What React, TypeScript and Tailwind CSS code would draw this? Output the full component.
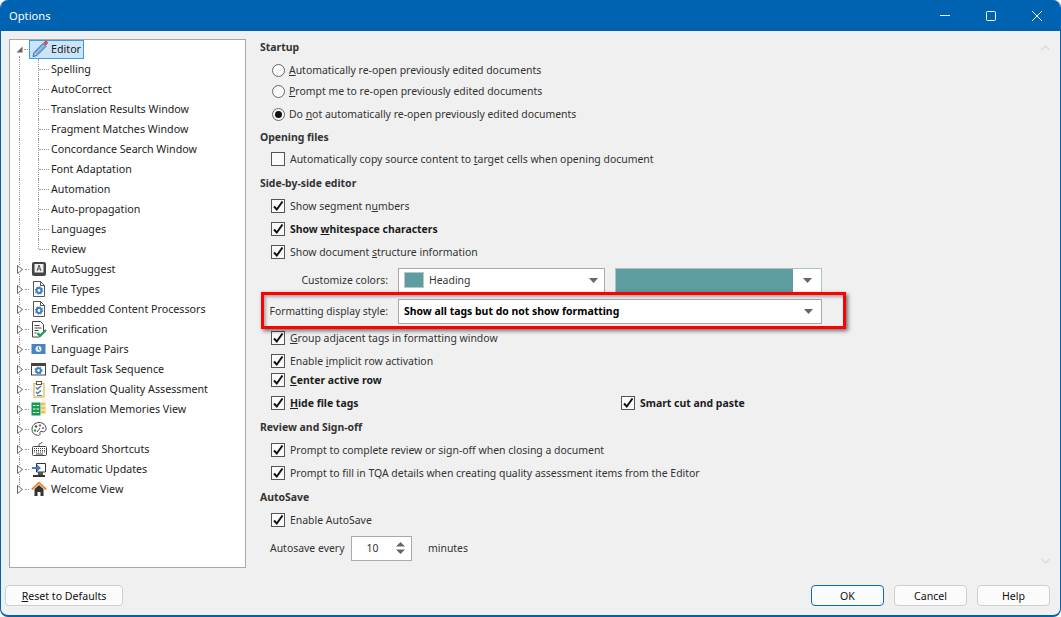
import React from 'react';

const Gear = ({ x, y, r = 3.4, color = '#3f7cc0' }: { x: number; y: number; r?: number; color?: string }) => (
  <g>
    <circle cx={x} cy={y} r={r} fill="none" stroke={color} strokeWidth={2} />
    <circle cx={x} cy={y} r={r + 1.2} fill="none" stroke={color} strokeWidth={1.2} strokeDasharray="1.4 1.4" />
    <circle cx={x} cy={y} r={1} fill="#fff" />
  </g>
);

const DocGear = () => (
  <svg width="16" height="16" viewBox="0 0 16 16">
    <path d="M2.5.5h7l4 4v11h-11z" fill="#fff" stroke="#555" />
    <path d="M9.5.5v4h4" fill="none" stroke="#555" />
    <Gear x={8} y={9.5} r={2.4} />
  </svg>
);

const icons: Record<string, React.ReactNode> = {
  editor: (
    <svg width="18" height="18" viewBox="0 0 18 18">
      <path d="M12 3.5l3 3L6 15.5l-4 1 1-4z" fill="#a9c8ea" stroke="#2f6db5" />
      <path d="M4 12.5l8.500-8.500M5.500 14l8.500-8.500" stroke="#2f6db5" strokeWidth={0.7} />
      <path d="M12.500 3l1.500-1.500a1.400 1.400 0 0 1 2.200 0.300 1.400 1.400 0 0 1 0 1.900L14.800 5.200z" fill="#d9534f" stroke="#b03a3a" strokeWidth={0.6} />
    </svg>
  ),
  suggest: (
    <svg width="16" height="16" viewBox="0 0 16 16">
      <rect x="1" y="1" width="14" height="14" rx="2" fill="#444" />
      <rect x="3.500" y="3" width="9" height="8.500" fill="#eee" />
      <path d="M6 10l2-6 2 6M6.800 8h2.400" fill="none" stroke="#444" strokeWidth={0.9} />
    </svg>
  ),
  doc: <DocGear />,
  verify: (
    <svg width="16" height="17" viewBox="0 0 16 17">
      <path d="M1.500.5h8l3 3v8l-4 4.500H1.500z" fill="#fff" stroke="#444" />
      <path d="M3.500 4.500h5M3.500 7h7M3.500 9.500h4M3.500 12h2" stroke="#444" />
      <path d="M6.500 12l2.500 2.800L15 9" fill="none" stroke="#1f9d55" strokeWidth={2.400} />
    </svg>
  ),
  pairs: (
    <svg width="16" height="16" viewBox="0 0 16 16">
      <rect x="0.500" y="3" width="14" height="10" fill="#4a83c4" />
      <circle cx="7.500" cy="8" r="3" fill="#e8f0fa" />
      <path d="M7.500 6v2.500l1.300.5" fill="none" stroke="#4a83c4" />
    </svg>
  ),
  task: (
    <svg width="16" height="16" viewBox="0 0 16 16">
      <rect x="0.500" y="2.500" width="14" height="11.500" fill="#fff" stroke="#444" />
      <rect x="0.500" y="2.500" width="14" height="2.500" fill="#444" />
      <Gear x={7.500} y={9.500} r={2.200} />
    </svg>
  ),
  tqa: (
    <svg width="16" height="17" viewBox="0 0 16 17">
      <rect x="3" y="2.500" width="10" height="13.500" fill="#fff" stroke="#e8b04a" strokeWidth={1.200} />
      <rect x="5.500" y="0.500" width="5" height="3" fill="#fff" stroke="#555" />
      <path d="M5 6.500l1.500 1.500L10 5M5 11l1.500 1.500L10 9.500" fill="none" stroke="#3f7cc0" strokeWidth={1.300} />
      <path d="M6 14.500h5" stroke="#3f7cc0" />
    </svg>
  ),
  tm: (
    <svg width="16" height="16" viewBox="0 0 16 16">
      <rect x="0.500" y="1.500" width="9" height="13" fill="#159a55" />
      <path d="M2 4.500h2.500M5.500 4.500H8M2 8h2.500M5.500 8H8M2 11.500h2.500M5.500 11.500H8" stroke="#fff" />
      <rect x="10" y="1.500" width="4.500" height="11" fill="#f2c14e" />
      <path d="M10 5h4.500M10 9h4.500" stroke="#fff" />
    </svg>
  ),
  colors: (
    <svg width="16" height="16" viewBox="0 0 16 16">
      <path d="M8 1.500c4 0 7 2.500 7 6s-2.500 3.500-4 3-2.500 0.500-2 2-1 2-2.500 1.800C3 14 1 11.500 1 8.500 1 4.500 4 1.500 8 1.500z" fill="#fff" stroke="#444" />
      <circle cx="5" cy="5.500" r="1.200" fill="#555" />
      <circle cx="9" cy="4.500" r="1.200" fill="#d9534f" />
      <circle cx="12" cy="7" r="1.100" fill="#3f7cc0" />
      <circle cx="4" cy="9.500" r="1.200" fill="#1f9d55" />
      <path d="M6 11l3-4" stroke="#444" />
    </svg>
  ),
  keyboard: (
    <svg width="15" height="16" viewBox="0 0 15 16">
      <path d="M7 5V3.500c0-1.500 3-.5 3-2.500" fill="none" stroke="#444" />
      <rect x="0.500" y="5.500" width="14" height="9" rx="1" fill="#fff" stroke="#444" />
      <path d="M2 7.500h11M2 9.500h11M2 11h11" stroke="#444" strokeDasharray="1 1" />
      <path d="M4 13h7" stroke="#444" />
    </svg>
  ),
  updates: (
    <svg width="16" height="17" viewBox="0 0 16 17">
      <path d="M5.500 2.500h9v8.500h-9z" fill="#fff" stroke="#333" />
      <path d="M2 14h12v2H2z" fill="#333" />
      <path d="M7 11v3h5v-3" fill="#555" />
      <path d="M1 6h5V3.500L10 7l-4 3.500V8H1z" fill="#3f7cc0" />
    </svg>
  ),
  home: (
    <svg width="16" height="16" viewBox="0 0 16 16">
      <path d="M8 4l4.500 4v7h-3v-4h-3v4h-3V8z" fill="#333" />
      <path d="M0.800 8.500L8 1.800l7.200 6.700" fill="none" stroke="#e8833a" strokeWidth={1.800} />
    </svg>
  ),
};

const childItems = ['Spelling', 'AutoCorrect', 'Translation Results Window', 'Fragment Matches Window', 'Concordance Search Window', 'Font Adaptation', 'Automation', 'Auto-propagation', 'Languages', 'Review'];

const parentItems = [
  { label: 'AutoSuggest', icon: 'suggest' },
  { label: 'File Types', icon: 'doc' },
  { label: 'Embedded Content Processors', icon: 'doc' },
  { label: 'Verification', icon: 'verify' },
  { label: 'Language Pairs', icon: 'pairs' },
  { label: 'Default Task Sequence', icon: 'task' },
  { label: 'Translation Quality Assessment', icon: 'tqa' },
  { label: 'Translation Memories View', icon: 'tm' },
  { label: 'Colors', icon: 'colors' },
  { label: 'Keyboard Shortcuts', icon: 'keyboard' },
  { label: 'Automatic Updates', icon: 'updates' },
  { label: 'Welcome View', icon: 'home' },
];

const Tree = () => (
  <div className="w-[237px] h-[529px] shrink-0 bg-white border border-[#a8a8a8] text-[#1c1c1c] text-[10.7px]">
    <div className="relative h-5 flex items-center -mt-px">
      <span className="absolute left-[9px] top-[17px] h-[4px] border-l border-dotted border-[#999]" />
      <svg className="ml-[6px] shrink-0" width="7" height="7" viewBox="0 0 7 7"><path d="M6.500.5v6h-6z" fill="#666" /></svg>
      <span className="w-[6px] ml-px border-t border-dotted border-[#999]" />
      <div className="ml-[-1px] flex items-center h-[19px] w-[55px] bg-[#cce4f7] border border-[#3d9be0]">
        <span className="w-[20px] flex justify-center">{icons.editor}</span>
        <span className="ml-px">Editor</span>
      </div>
    </div>
    {childItems.map((label, i) => (
      <div key={label} className="relative h-5 flex items-center pl-[41px]">
        <span className="absolute left-[9px] top-0 h-5 border-l border-dotted border-[#999]" />
        <span className={i === childItems.length - 1 ? 'absolute left-[28px] top-0 h-[10px] border-l border-dotted border-[#999]' : 'absolute left-[28px] top-0 h-5 border-l border-dotted border-[#999]'} />
        <span className="absolute left-[29px] top-[10px] w-[10px] border-t border-dotted border-[#999]" />
        {label}
      </div>
    ))}
    {parentItems.map((p, i) => (
      <div key={p.label} className="relative h-5 flex items-center">
        <span className="absolute left-[9px] top-0 h-[6px] border-l border-dotted border-[#999]" />
        {i < parentItems.length - 1 && <span className="absolute left-[9px] top-[15px] h-[5px] border-l border-dotted border-[#999]" />}
        <svg className="ml-[7px] shrink-0" width="6" height="9" viewBox="0 0 6 9"><path d="M.5.5l5 4-5 4z" fill="#fff" stroke="#666" /></svg>
        <span className="ml-[2px] w-[4px] border-t border-dotted border-[#999]" />
        <span className="ml-[2px] w-[16px] flex justify-center shrink-0">{icons[p.icon]}</span>
        <span className="ml-[4px]">{p.label}</span>
      </div>
    ))}
  </div>
);

const Caret = () => (
  <svg width="9" height="5" viewBox="0 0 9 5"><path d="M0 0h9L4.500 5z" fill="#666" /></svg>
);

const Check = ({ checked = true }: { checked?: boolean }) => (
  <span className="w-[14px] h-[14px] shrink-0 border border-[#555] bg-[#fafafa] flex items-center justify-center">
    {checked && (
      <svg width="12" height="12" viewBox="0 0 12 12"><path d="M2 6.500L4.800 9.500 10.500 1.500" fill="none" stroke="#111" strokeWidth={2} /></svg>
    )}
  </span>
);

const Radio = ({ checked = false }: { checked?: boolean }) => (
  <span className="w-[13px] h-[13px] shrink-0 rounded-full border border-[#666] bg-[#fafafa] flex items-center justify-center">
    {checked && <span className="w-[7px] h-[7px] rounded-full bg-[#111]" />}
  </span>
);

const Heading = ({ h, children }: { h: string; children: React.ReactNode }) => (
  <div className={`${h} flex items-center pl-[5px] font-bold text-[#333]`}>{children}</div>
);

const CheckRow = ({ h, bold, children, checked }: { h: string; bold?: boolean; checked?: boolean; children: React.ReactNode }) => (
  <div className={`${h} flex items-center pl-[16px] gap-[5px]`}>
    <Check checked={checked !== false} />
    <span className={bold ? 'font-bold text-[#1c1c1c]' : ''}>{children}</span>
  </div>
);

const RadioRow = ({ h, checked, children }: { h: string; checked?: boolean; children: React.ReactNode }) => (
  <div className={`${h} flex items-center pl-[17px] gap-[4px]`}>
    <Radio checked={checked} />
    <span>{children}</span>
  </div>
);

const Settings = () => (
  <div className="w-[784px] ml-[9px] -mt-[3px] text-[#333] text-[10.45px]">
    <Heading h="h-[22px] pt-[1px]">Startup</Heading>
    <RadioRow h="h-[24px]"><u>A</u>utomatically re-open previously edited documents</RadioRow>
    <RadioRow h="h-[18px]"><u>P</u>rompt me to re-open previously edited documents</RadioRow>
    <RadioRow h="h-[28px]" checked>Do <u>n</u>ot automatically re-open previously edited documents</RadioRow>
    <Heading h="h-[18px]">Opening files</Heading>
    <CheckRow h="h-[26px]" checked={false}>Automatically copy source content to <u>t</u>arget cells when opening document</CheckRow>
    <Heading h="h-[22px]">Side-by-side editor</Heading>
    <CheckRow h="h-[24px]">Show segment n<u>u</u>mbers</CheckRow>
    <CheckRow h="h-[22px]" bold>Show <u>w</u>hitespace characters</CheckRow>
    <CheckRow h="h-[24px]">Show document <u>s</u>tructure information</CheckRow>
    <div className="h-[32px] flex items-center">
      <span className="w-[133px] text-right">Customize colors:</span>
      <div className="ml-[10px] w-[207px] h-[25px] bg-white border border-[#a9a9a9] flex items-center pl-[5px] pr-[6px]">
        <span className="w-[20px] h-[16px] bg-[#5f9ea0] border border-[#b5c9c9]" />
        <span className="ml-[5px] flex-1">Heading</span>
        <Caret />
      </div>
      <div className="ml-[10px] w-[207px] h-[25px] bg-white border border-[#a9c4c4] flex items-center">
        <span className="w-[177px] h-full bg-[#5f9ea0]" />
        <span className="flex-1 flex justify-center"><Caret /></span>
      </div>
    </div>
    <div className="relative h-[30px] flex items-center">
      <span className="absolute left-[6px] top-[-4px] w-[585px] h-[37px] border-[3px] border-[#ff0000] shadow-[2px_2px_4px_rgba(0,0,0,0.55),inset_2px_2px_3px_rgba(0,0,0,0.3)] z-10" />
      <span className="w-[133px] text-right text-[10.3px]">Formatting display style:</span>
      <div className="ml-[10px] w-[424px] h-[25px] bg-white border border-[#a9a9a9] flex items-center pl-[5px] pr-[8px]">
        <span className="flex-1 font-bold text-black">Show all tags but do not show formatting</span>
        <Caret />
      </div>
    </div>
    <CheckRow h="h-[24px]"><u>G</u>roup adjacent tags in formatting window</CheckRow>
    <CheckRow h="h-[22px]">Enable <u>i</u>mplicit row activation</CheckRow>
    <CheckRow h="h-[16px]" bold><u>C</u>enter active row</CheckRow>
    <div className="h-[30px] flex items-center">
      <CheckRow h="w-[350px]" bold><u>H</u>ide file tags</CheckRow>
      <CheckRow h="" bold>Smart cut and paste</CheckRow>
    </div>
    <Heading h="h-[18px]">Review and Sign-off</Heading>
    <CheckRow h="h-[28px]">Prompt to complete review or sign-off when closing a document</CheckRow>
    <CheckRow h="h-[18px]">Prompt to fill in TQA details when creating quality assessment items from the Editor</CheckRow>
    <Heading h="h-[30px]">AutoSave</Heading>
    <CheckRow h="h-[16px]">Enable AutoSave</CheckRow>
    <div className="h-[40px] flex items-center pl-[15px]">
      <span className="w-[81px] whitespace-nowrap">Autosave every</span>
      <div className="w-[61px] h-[25px] bg-white border border-[#a9a9a9] flex items-center">
        <span className="w-[41px] text-center">10</span>
        <svg className="ml-[3px]" width="9" height="12" viewBox="0 0 9 12"><path d="M0 4.500L4.500 0 9 4.500zM0 7.500L4.500 12 9 7.500z" fill="#666" /></svg>
      </div>
      <span className="ml-[16px]">minutes</span>
    </div>
  </div>
);

const Chevron = ({ up }: { up?: boolean }) => (
  <svg width="9" height="6" viewBox="0 0 9 6"><path d={up ? 'M.5 5L4.500 1l4 4' : 'M.5 1l4 4 4-4'} fill="none" stroke="#d8d8d8" strokeWidth={1.200} /></svg>
);

const Btn = ({ primary, w, children }: { primary?: boolean; w: string; children: React.ReactNode }) => (
  <button className={`${w} h-[21px] pt-px rounded-[4px] bg-[#fbfbfb] text-[#111] border ${primary ? 'border-[#0a6cbd]' : 'border-[#cfcfcf]'}`}>{children}</button>
);

export default function App() {
  return (
    <div className="w-[1061px] h-[617px] bg-white">
      <div className="w-full h-full flex flex-col rounded-t-[8px] rounded-b-[8px] overflow-hidden bg-[#f0f0f0] border-x-[1.5px] border-b-2 border-[#0063b1] text-[10.6px] leading-none font-['Noto_Sans',sans-serif]">
        <div className="h-[31px] shrink-0 bg-[#0063b1] text-white flex items-center -mx-px">
          <span className="ml-[9px] flex-1 text-[11.2px] pt-[1px]">Options</span>
          <svg className="mr-[36px]" width="10" height="2" viewBox="0 0 10 2"><path d="M0 .5h10" stroke="#fff" /></svg>
          <svg className="mr-[36px]" width="10" height="10" viewBox="0 0 10 10"><rect x=".5" y=".5" width="9" height="9" rx="1" fill="none" stroke="#fff" /></svg>
          <svg className="mr-[19px]" width="10" height="10" viewBox="0 0 10 10"><path d="M0 0l10 10M10 0L0 10" stroke="#fff" /></svg>
        </div>
        <div className="flex-1 flex pt-[8px] pl-[8px]">
          <Tree />
          <div className="relative flex">
            <Settings />
            <div className="flex flex-col items-center justify-between w-[12px] pt-[6px] pb-[2px] h-[527px]">
              <Chevron up />
              <Chevron />
            </div>
          </div>
        </div>
        <div className="h-[31px] shrink-0 flex items-start pl-[4px] pr-[10px] pt-px">
          <Btn w="w-[118px]"><u>R</u>eset to Defaults</Btn>
          <span className="flex-1" />
          <Btn primary w="w-[73px]">OK</Btn>
          <span className="w-[10px]" />
          <Btn w="w-[73px]">Cancel</Btn>
          <span className="w-[10px]" />
          <Btn w="w-[73px]">Help</Btn>
        </div>
      </div>
    </div>
  );
}
